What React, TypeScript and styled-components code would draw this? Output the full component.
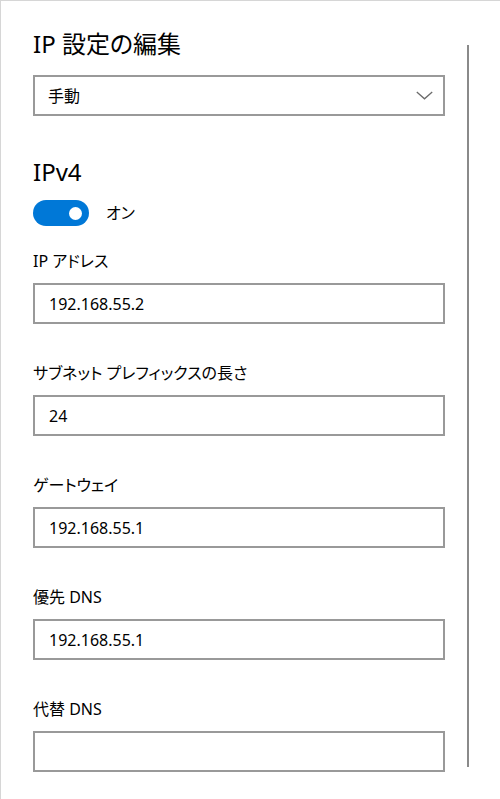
import React, { FC } from "react"
import styled, { createGlobalStyle } from "styled-components"

const GlobalStyle = createGlobalStyle`
  html, body {
    margin: 0;
    padding: 0;
    background: #ffffff;
  }
  body {
    font-family: "Noto Sans", "Noto Sans CJK JP", sans-serif;
    color: #000000;
    font-feature-settings: "palt";
  }
`

interface IField {
  label: string
  value?: string
}

const fields: IField[] = [
  { label: "IP アドレス", value: "192.168.55.2" },
  { label: "サブネット プレフィックスの長さ", value: "24" },
  { label: "ゲートウェイ", value: "192.168.55.1" },
  { label: "優先 DNS", value: "192.168.55.1" },
  { label: "代替 DNS" },
]

const Chevron: FC = () => (
  <svg width="17" height="9" viewBox="0 0 17 9" fill="none">
    <path d="M0.8 1 L8.5 7.8 L16.2 1" stroke="#6b6b6b" strokeWidth="1.3" />
  </svg>
)

export default function App() {
  return (
    <>
      <GlobalStyle />
      <Frame>
        <Content>
          <Title>IP 設定の編集</Title>
          <Select>
            <span className="value">手動</span>
            <Chevron />
          </Select>
          <Heading>IPv4</Heading>
          <ToggleRow>
            <Toggle $on>
              <span className="knob" />
            </Toggle>
            <span className="state">オン</span>
          </ToggleRow>
          <Fields>
            {fields.map((f) => (
              <Field key={f.label}>
                <Label>{f.label}</Label>
                <Input>{f.value ?? ""}</Input>
              </Field>
            ))}
          </Fields>
        </Content>
        <ScrollTrack />
      </Frame>
    </>
  )
}

const Frame = styled.div`
  display: flex;
  width: 499px;
  height: 798px;
  border-top: 1px solid #d6d6d6;
  border-left: 1px solid #d6d6d6;
  overflow: hidden;
`

const Content = styled.div`
  display: flex;
  flex-direction: column;
  width: 412px;
  padding: 27px 0 0 32px;
  flex-shrink: 0;
`

const Title = styled.div`
  font-size: 24px;
  line-height: 32px;
  font-weight: 400;
  white-space: nowrap;
`

const Select = styled.div`
  display: flex;
  align-items: center;
  justify-content: space-between;
  box-sizing: border-box;
  height: 41px;
  margin-top: 15px;
  padding: 0 10px 0 13px;
  border: 2px solid #999999;
  font-size: 16px;

  & > .value {
    line-height: 22px;
  }
`

const Heading = styled.div`
  margin-top: 40px;
  font-size: 24px;
  line-height: 32px;
`

const ToggleRow = styled.div`
  display: flex;
  align-items: center;
  gap: 17px;
  margin-top: 12px;

  & > .state {
    font-size: 16px;
    line-height: 22px;
  }
`

const Toggle = styled.div<{ $on?: boolean }>`
  position: relative;
  width: 56px;
  height: 26px;
  border-radius: 13px;
  background: ${(p) => (p.$on ? "#0078d7" : "#ffffff")};
  flex-shrink: 0;

  & > .knob {
    position: absolute;
    top: 6.5px;
    right: 7px;
    width: 13px;
    height: 13px;
    border-radius: 50%;
    background: #ffffff;
  }
`

const Fields = styled.div`
  display: flex;
  flex-direction: column;
  gap: 38px;
  margin-top: 24px;
`

const Field = styled.div`
  display: flex;
  flex-direction: column;
  gap: 11px;
`

const Label = styled.div`
  font-size: 16px;
  line-height: 22px;
  white-space: nowrap;
`

const Input = styled.div`
  display: flex;
  align-items: center;
  box-sizing: border-box;
  height: 41px;
  padding-left: 14px;
  border: 2px solid #999999;
  font-size: 16px;
`

const ScrollTrack = styled.div`
  width: 2px;
  height: 722px;
  margin: 44px 0 0 22px;
  background: #8a8a8a;
  flex-shrink: 0;
`
